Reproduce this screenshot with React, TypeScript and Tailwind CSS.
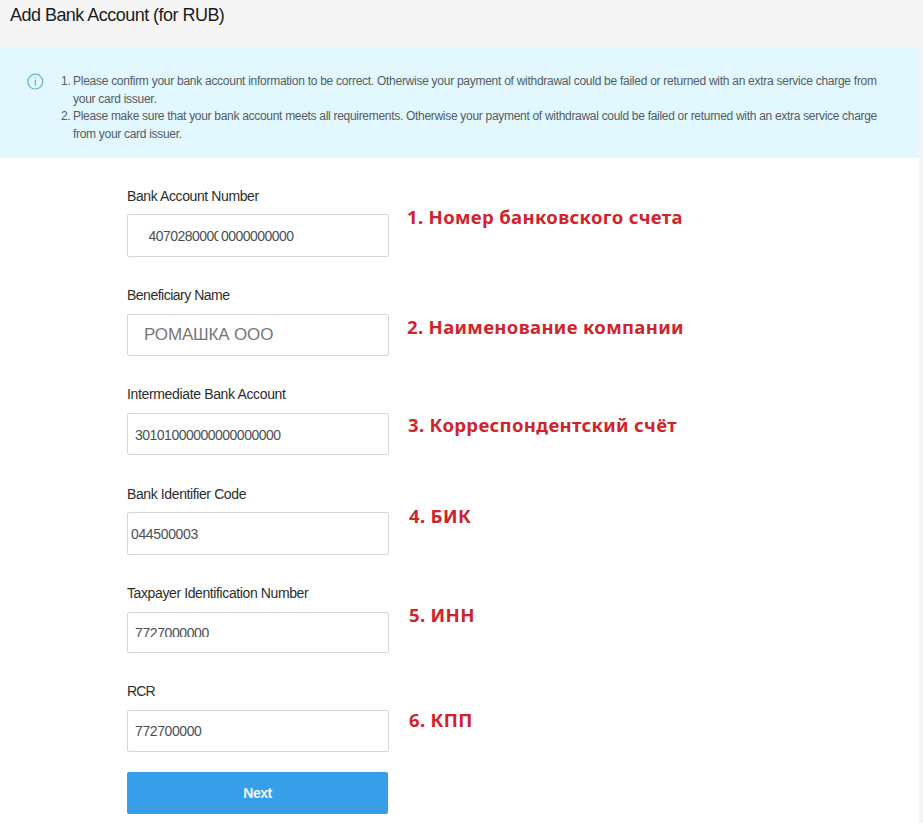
import React from "react";

type Field = {
  label: string;
  labelClass: string;
  value: React.ReactNode;
  valueClass: string;
  rowClass: string;
  boxClass: string;
  note: string;
  noteClass: string;
};

const fields: Field[] = [
  {
    label: "Bank Account Number",
    labelClass: "tracking-[-0.4px]",
    value: (
      <>
        407028000<span className="inline-block [clip-path:inset(0_2.5px_0_0)]">0</span>0000000000
      </>
    ),
    valueClass: "ml-[20.5px] mt-[1px] text-[14px] text-[#4b4f52] tracking-[-0.54px]",
    rowClass: "h-[99px]",
    boxClass: "h-[43px]",
    note: "1. Номер банковского счета",
    noteClass: "ml-[18px] -mt-[10px]",
  },
  {
    label: "Beneficiary Name",
    labelClass: "tracking-[-0.5px]",
    value: "РОМАШКА ООО",
    valueClass: "ml-[16px] -mt-px text-[17px] text-[#777777] tracking-[-0.15px]",
    rowClass: "h-[99px]",
    boxClass: "mt-px h-[42px]",
    note: "2. Наименование компании",
    noteClass: "ml-[18px] mt-[1px]",
  },
  {
    label: "Intermediate Bank Account",
    labelClass: "tracking-[-0.35px]",
    value: "30101000000000000000",
    valueClass: "ml-[7px] mt-px text-[14px] text-[#4b4f52] tracking-[-0.51px]",
    rowClass: "h-[100px]",
    boxClass: "mt-px h-[42px]",
    note: "3. Корреспондентский счёт",
    noteClass: "ml-[19px] mt-0",
  },
  {
    label: "Bank Identifier Code",
    labelClass: "tracking-[-0.39px]",
    value: "044500003",
    valueClass: "ml-[3px] mt-[1px] text-[14px] text-[#4b4f52] tracking-[-0.35px]",
    rowClass: "h-[99px]",
    boxClass: "h-[43px]",
    note: "4. БИК",
    noteClass: "ml-[20px] -mt-[9px]",
  },
  {
    label: "Taxpayer Identification Number",
    labelClass: "tracking-[-0.39px]",
    value: <span className="block [clip-path:inset(0_0_6px_0)]">7727000000</span>,
    valueClass: "ml-[7px] mt-[1px] text-[14px] text-[#4b4f52] tracking-[-0.4px]",
    rowClass: "h-[98px]",
    boxClass: "mt-px h-[41px]",
    note: "5. ИНН",
    noteClass: "ml-[20px] -mt-[9px]",
  },
  {
    label: "RCR",
    labelClass: "tracking-[-0.9px]",
    value: "772700000",
    valueClass: "ml-[7px] mt-0 text-[14px] text-[#4b4f52] tracking-[-0.4px]",
    rowClass: "h-[92px]",
    boxClass: "mt-px h-[42px]",
    note: "6. КПП",
    noteClass: "ml-[20px] -mt-[2px]",
  },
];

export default function App() {
  return (
    <div className="flex h-[823px] w-[923px] overflow-hidden bg-[#f5f5f6] font-['Liberation_Sans',Arial,sans-serif]">
      <div className="flex w-[919px] flex-col bg-white">
        <header className="h-[48px] bg-[#f5f5f6] pl-[10px] pt-[5px]">
          <h1 className="text-[18px] leading-[20px] tracking-[-0.53px] text-[#1c1c1c]">Add Bank Account (for RUB)</h1>
        </header>

        <section className="flex h-[110px] bg-[#e2f7fe]">
          <svg className="ml-[27px] mt-[25px] h-[17px] w-[17px] shrink-0" viewBox="0 0 17 17" fill="none" stroke="#62b4cc">
            <circle cx="8.3" cy="8.6" r="7.4" strokeWidth="1.2" />
            <path d="M8.3 7v5.6M8.3 4.2v1.3" strokeWidth="1.2" />
          </svg>
          <ol className="ml-[17px] mt-[25px] text-[12px] leading-[17.5px] text-[#545d62]">
            <li className="flex tracking-[-0.27px]">
              <span className="w-[12px]">1.</span>
              <span className="whitespace-nowrap">
                Please confirm your bank account information to be correct. Otherwise your payment of withdrawal could be failed or returned with an extra service charge from
                <br />
                your card issuer.
              </span>
            </li>
            <li className="flex tracking-[-0.3px]">
              <span className="w-[12px]">2.</span>
              <span className="whitespace-nowrap">
                Please make sure that your bank account meets all requirements. Otherwise your payment of withdrawal could be failed or returned with an extra service charge
                <br />
                from your card issuer.
              </span>
            </li>
          </ol>
        </section>

        <form className="flex flex-col pl-[127px] pt-[28px]">
          {fields.map((f) => (
            <div key={f.label} className={`flex flex-col ${f.rowClass}`}>
              <label className={`h-[28px] pt-px text-[14px] leading-[19px] text-[#2d2d2d] ${f.labelClass}`}>{f.label}</label>
              <div className="flex items-start">
                <div className={`flex w-[262px] shrink-0 items-center rounded-[2px] border border-[#d5d5d5] bg-white ${f.boxClass}`}>
                  <div className={`whitespace-nowrap leading-[20px] ${f.valueClass}`}>{f.value}</div>
                </div>
                <div className={`whitespace-nowrap font-['Noto_Sans',sans-serif] text-[18.5px] font-bold leading-[26px] tracking-[0.34px] text-[#d0242b] ${f.noteClass}`}>
                  {f.note}
                </div>
              </div>
            </div>
          ))}
          <button type="button" className="-mt-[1px] h-[42px] w-[261px] rounded-[2px] bg-[#379fe9] text-[14px] font-bold tracking-[-0.5px] text-[#eef8ff]">
            Next
          </button>
        </form>
      </div>
    </div>
  );
}
